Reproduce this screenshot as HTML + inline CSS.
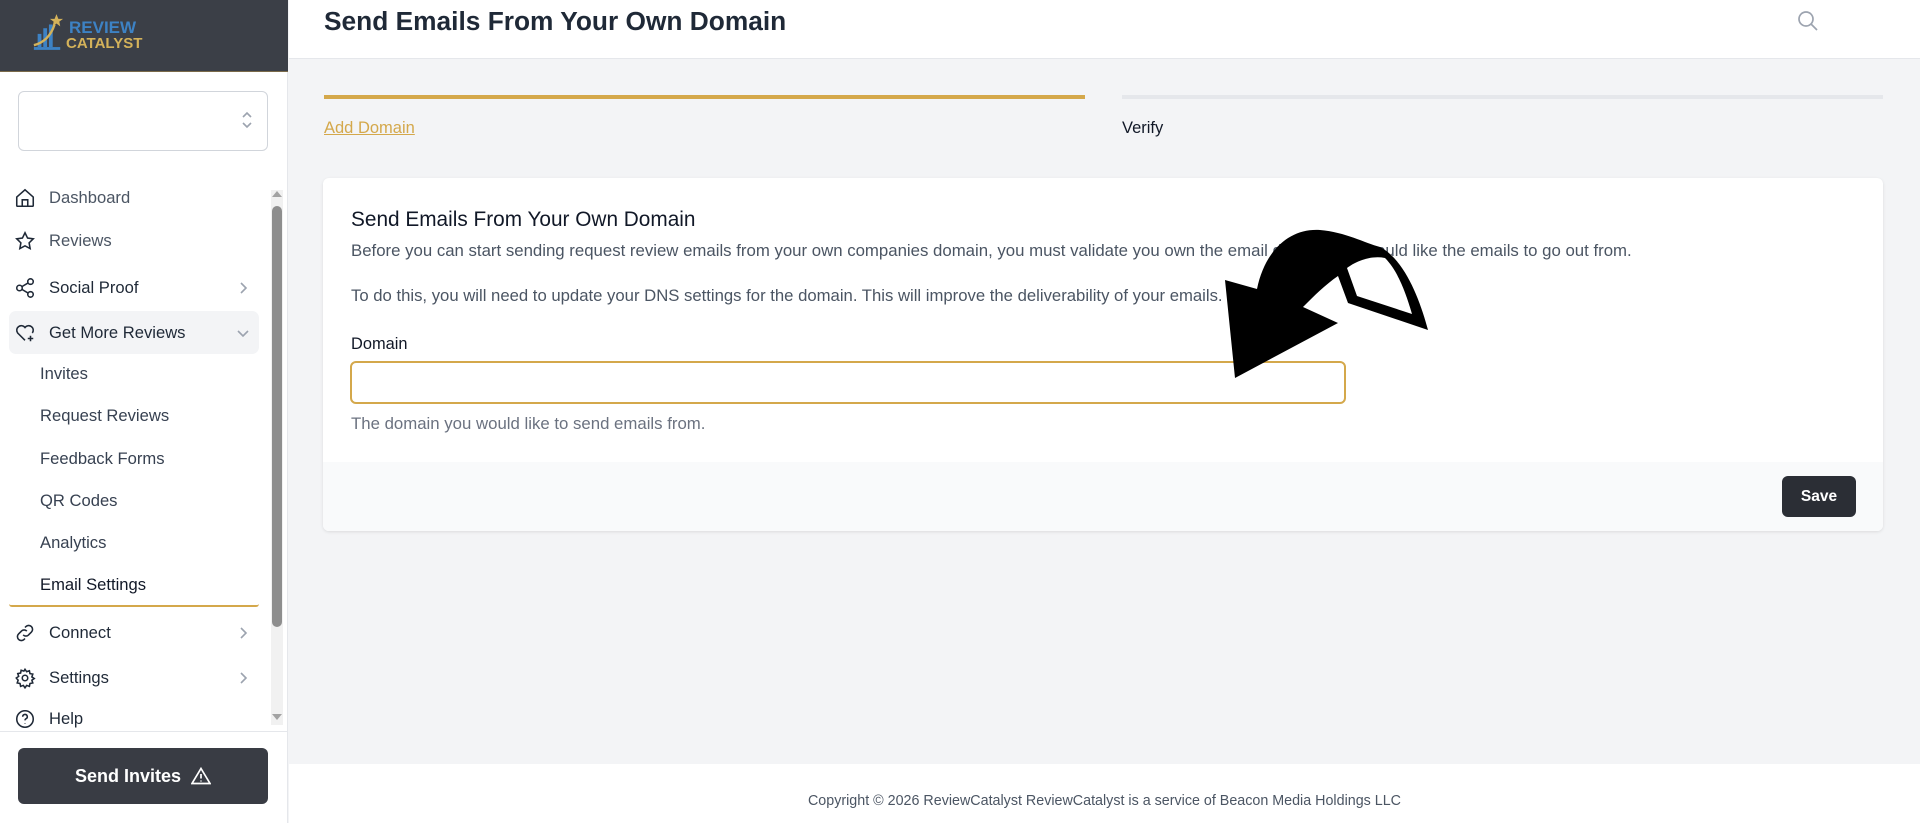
<!DOCTYPE html>
<html><head><meta charset="utf-8"><style>
*{box-sizing:border-box;margin:0;padding:0}
body{width:1920px;height:823px;overflow:hidden;font-family:"Liberation Sans",sans-serif;background:#f3f4f6;position:relative;color:#111827}
.abs{position:absolute}
#side{left:0;top:0;width:288px;height:823px;background:#fff;border-right:1px solid #e5e7eb}
#logo{left:0;top:0;width:288px;height:72px;background:#3b3f47;border-bottom:1px solid #7a6a4a}
.nav{position:absolute;left:49px;font-size:16.6px;color:#1f2937}
.sub{position:absolute;left:40px;font-size:16.6px;color:#374151}
.ic{position:absolute;left:14px;width:22px;height:22px}
.chev{position:absolute;left:236px;width:14px;height:14px}
</style></head><body>
<div id="side" class="abs">
 <div id="logo" class="abs">
  <svg class="abs" style="left:32px;top:13px" width="32" height="38" viewBox="0 0 34 40">
   <rect x="6" y="22" width="4" height="14" fill="#3d82c4"/><rect x="12" y="16" width="4" height="20" fill="#3d82c4"/><rect x="18" y="12" width="4" height="24" fill="#3d82c4"/>
   <rect x="2" y="36" width="28" height="3" fill="#3d82c4"/>
   <path d="M2 34 Q18 30 24 12" stroke="#d4b25a" stroke-width="2.5" fill="none"/>
   <polygon points="26,1 28,6 33,6 29,9 30,14 26,11 22,14 23,9 19,6 24,6" fill="#d4b25a"/>
  </svg>
  <div class="abs" style="left:69px;top:18px;font-size:17px;font-weight:bold;color:#3d82c4">REVIEW</div>
  <div class="abs" style="left:66px;top:35px;font-size:15px;font-weight:bold;color:#d4b25a">CATALYST</div>
 </div>
 <div class="abs" style="left:18px;top:91px;width:250px;height:60px;border:1px solid #d1d5db;border-radius:6px"></div>
 <svg class="abs" style="left:241px;top:111px" width="12" height="18" viewBox="0 0 12 18" fill="none" stroke="#9ca3af" stroke-width="1.6"><path d="M2 6 L6 2 L10 6 M2 12 L6 16 L10 12"/></svg>

 <svg class="ic" style="top:187px" viewBox="0 0 24 24" fill="none" stroke="#1f2937" stroke-width="1.7"><path d="M3 11 L12 3 L21 11 V20 a1 1 0 0 1-1 1 H4 a1 1 0 0 1-1-1Z M9 21 V14 h6 v7"/></svg>
 <div class="nav" style="top:188px;color:#4b5563">Dashboard</div>
 <svg class="ic" style="top:230px" viewBox="0 0 24 24" fill="none" stroke="#1f2937" stroke-width="1.7"><path d="M12 3 L14.8 8.8 L21 9.6 L16.5 14 L17.6 20.3 L12 17.3 L6.4 20.3 L7.5 14 L3 9.6 L9.2 8.8Z"/></svg>
 <div class="nav" style="top:231px;color:#4b5563">Reviews</div>
 <svg class="ic" style="top:277px" viewBox="0 0 24 24" fill="none" stroke="#1f2937" stroke-width="1.7"><circle cx="6" cy="12" r="3"/><circle cx="18" cy="5" r="3"/><circle cx="18" cy="19" r="3"/><path d="M8.6 10.5 L15.4 6.5 M8.6 13.5 L15.4 17.5"/></svg>
 <div class="nav" style="top:278px">Social Proof</div>
 <svg class="chev" style="top:281px" viewBox="0 0 14 14" fill="none" stroke="#9ca3af" stroke-width="1.6"><path d="M5 2 L10 7 L5 12"/></svg>
 <div class="abs" style="left:9px;top:311px;width:250px;height:43px;background:#f3f4f6;border-radius:7px"></div>
 <svg class="ic" style="top:322px" viewBox="0 0 24 24" fill="none" stroke="#1f2937" stroke-width="1.7"><path d="M12 20 L4 12 A4.5 4.5 0 0 1 12 6 A4.5 4.5 0 0 1 20 12 M15 18 h6 M18 15 v6"/></svg>
 <div class="nav" style="top:323px">Get More Reviews</div>
 <svg class="chev" style="top:326px" viewBox="0 0 14 14" fill="none" stroke="#9ca3af" stroke-width="1.6"><path d="M2 5 L7 10 L12 5"/></svg>
 <div class="sub" style="top:364px">Invites</div>
 <div class="sub" style="top:406px">Request Reviews</div>
 <div class="sub" style="top:449px">Feedback Forms</div>
 <div class="sub" style="top:491px">QR Codes</div>
 <div class="sub" style="top:533px">Analytics</div>
 <div class="sub" style="top:575px;color:#111827">Email Settings</div>
 <div class="abs" style="left:9px;top:604px;width:250px;height:3px;border-bottom:2px solid #d4a84b;border-radius:0 0 6px 6px"></div>
 <svg class="ic" style="top:622px" viewBox="0 0 24 24" fill="none" stroke="#1f2937" stroke-width="1.7"><path d="M10 14 a4 4 0 0 0 6 0 l3-3 a4 4 0 0 0-6-6 l-1 1 M14 10 a4 4 0 0 0-6 0 l-3 3 a4 4 0 0 0 6 6 l1-1"/></svg>
 <div class="nav" style="top:623px">Connect</div>
 <svg class="chev" style="top:626px" viewBox="0 0 14 14" fill="none" stroke="#9ca3af" stroke-width="1.6"><path d="M5 2 L10 7 L5 12"/></svg>
 <svg class="ic" style="top:667px" viewBox="0 0 24 24" fill="none" stroke="#1f2937" stroke-width="1.7"><circle cx="12" cy="12" r="3"/><path d="M12 2.5 l1.8 2.6 3-1 .6 3.1 3.1.6-1 3 2.6 1.8-2.6 1.8 1 3-3.1.6-.6 3.1-3-1-1.8 2.6-1.8-2.6-3 1-.6-3.1-3.1-.6 1-3L2.5 12l2.6-1.8-1-3 3.1-.6.6-3.1 3 1Z"/></svg>
 <div class="nav" style="top:668px">Settings</div>
 <svg class="chev" style="top:671px" viewBox="0 0 14 14" fill="none" stroke="#9ca3af" stroke-width="1.6"><path d="M5 2 L10 7 L5 12"/></svg>
 <svg class="ic" style="top:708px" viewBox="0 0 24 24" fill="none" stroke="#1f2937" stroke-width="1.7"><circle cx="12" cy="12" r="9"/><path d="M9.5 9.5 a2.5 2.5 0 1 1 3.5 2.3 c-.7.4-1 .9-1 1.7 M12 16.5 v.5"/></svg>
 <div class="nav" style="top:709px">Help</div>
 <div class="abs" style="left:271px;top:190px;width:12px;height:535px;background:#f1f1f1"></div>
 <div class="abs" style="left:272px;top:191px;width:0;height:0;border-left:5px solid transparent;border-right:5px solid transparent;border-bottom:6px solid #a3a3a3"></div>
 <div class="abs" style="left:272px;top:714px;width:0;height:0;border-left:5px solid transparent;border-right:5px solid transparent;border-top:6px solid #a3a3a3"></div>
 <div class="abs" style="left:272px;top:206px;width:10px;height:421px;background:#8e8e8e;border-radius:5px"></div>
 <div class="abs" style="left:0;top:731px;width:288px;border-top:1px solid #e5e7eb"></div>
 <div class="abs" style="left:18px;top:748px;width:250px;height:56px;background:#393c44;border-radius:6px;color:#fff;font-size:18px;font-weight:bold;display:flex;align-items:center;justify-content:center;gap:10px">Send Invites <svg width="20" height="18" viewBox="0 0 20 18" fill="none" stroke="#fff" stroke-width="1.7"><path d="M10 1.5 L19 16.5 H1Z M10 7 v4.5 M10 13.5 v1"/></svg></div>
</div>

<div class="abs" style="left:289px;top:0;width:1631px;height:59px;background:#fff;border-bottom:1px solid #e5e7eb"></div>
<div class="abs" style="left:324px;top:6px;font-size:26.3px;font-weight:bold;color:#1f2937">Send Emails From Your Own Domain</div>
<svg class="abs" style="left:1796px;top:9px" width="24" height="24" viewBox="0 0 24 24" fill="none" stroke="#9ca3af" stroke-width="1.7"><circle cx="10" cy="10" r="7"/><path d="M15 15 L21 21"/></svg>

<div class="abs" style="left:324px;top:95px;width:761px;height:4px;background:#d4a84b"></div>
<div class="abs" style="left:1122px;top:95px;width:761px;height:4px;background:#e5e7eb"></div>
<div class="abs" style="left:324px;top:119px;font-size:16.5px;color:#d4a84b;text-decoration:underline">Add Domain</div>
<div class="abs" style="left:1122px;top:119px;font-size:16.5px;color:#111827">Verify</div>

<div class="abs" style="left:323px;top:178px;width:1560px;height:353px;background:#fff;border-radius:6px;box-shadow:0 1px 3px rgba(0,0,0,.1);overflow:hidden">
 <div class="abs" style="left:28px;top:30px;font-size:20.8px;color:#111827">Send Emails From Your Own Domain</div>
 <div class="abs" style="left:28px;top:63px;font-size:16.8px;color:#4b5563;white-space:nowrap">Before you can start sending request review emails from your own companies domain, you must validate you own the email domain you would like the emails to go out from.</div>
 <div class="abs" style="left:28px;top:108px;font-size:16.7px;color:#4b5563;white-space:nowrap">To do this, you will need to update your DNS settings for the domain. This will improve the deliverability of your emails.</div>
 <div class="abs" style="left:28px;top:157px;font-size:16.4px;color:#111827">Domain</div>
 <div class="abs" style="left:27px;top:183px;width:996px;height:43px;border:2px solid #d4a84b;border-radius:6px"></div>
 <div class="abs" style="left:28px;top:236px;font-size:16.8px;color:#6b7280">The domain you would like to send emails from.</div>
 <div class="abs" style="left:0;top:284px;width:1560px;height:69px;background:#f9fafb"></div>
 <div class="abs" style="left:1459px;top:298px;width:74px;height:41px;background:#2b2e35;border-radius:6px;color:#fff;font-size:15.5px;font-weight:bold;display:flex;align-items:center;justify-content:center">Save</div>
</div>

<svg class="abs" style="left:0;top:0" width="1920" height="823" viewBox="0 0 1920 823">
 <path d="M1235,378 L1225,280 L1257,289 C1265,250 1290,228 1320,230 C1345,232 1365,243 1380,247 C1405,260 1420,300 1428,330 L1348,303 L1338,276 C1325,285 1315,295 1303,307 L1338,323 Z" fill="#000"/>
 <path d="M1347,268 L1357,296 L1412,314 C1405,290 1397,270 1385,258 C1370,255 1355,262 1347,268 Z" fill="#fff"/>
</svg>

<div class="abs" style="left:289px;top:764px;width:1631px;height:59px;background:#fff"></div>
<div class="abs" style="left:289px;top:793px;width:1631px;text-align:center;font-size:14.3px;color:#4b5563">Copyright © 2026 ReviewCatalyst ReviewCatalyst is a service of Beacon Media Holdings LLC</div>
</body></html>
